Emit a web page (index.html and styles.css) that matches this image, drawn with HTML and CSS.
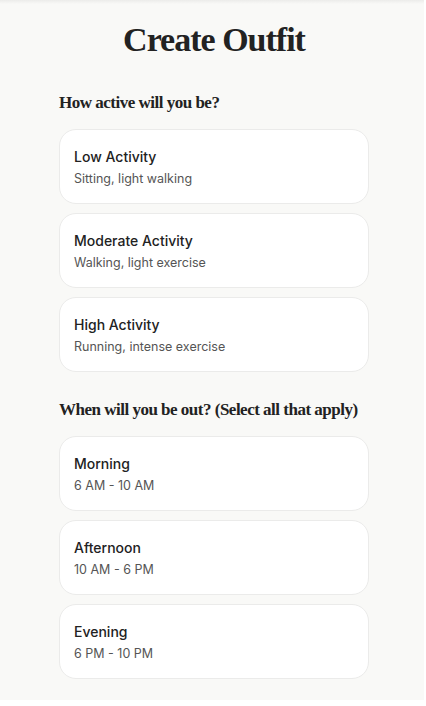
FILE: index.html
```html
<!DOCTYPE html>
<html lang="en">
<head>
<meta charset="utf-8">
<title>Create Outfit</title>
<link rel="stylesheet" href="styles.css">
</head>
<body>
<div class="page">
  <h1 class="title">Create Outfit</h1>
  <section class="group">
    <h2 class="group-heading">How active will you be?</h2>
    <div class="options">
      <div class="card"><div class="card-title">Low Activity</div><div class="card-sub">Sitting, light walking</div></div>
      <div class="card"><div class="card-title">Moderate Activity</div><div class="card-sub">Walking, light exercise</div></div>
      <div class="card"><div class="card-title">High Activity</div><div class="card-sub">Running, intense exercise</div></div>
    </div>
  </section>
  <section class="group">
    <h2 class="group-heading">When will you be out? (Select all that apply)</h2>
    <div class="options">
      <div class="card"><div class="card-title">Morning</div><div class="card-sub">6 AM - 10 AM</div></div>
      <div class="card"><div class="card-title">Afternoon</div><div class="card-sub">10 AM - 6 PM</div></div>
      <div class="card"><div class="card-title">Evening</div><div class="card-sub">6 PM - 10 PM</div></div>
    </div>
  </section>
</div>
</body>
</html>
```
FILE: styles.css
```css
html, body {
  margin: 0;
  padding: 0;
  background: #ffffff;
}
.page {
  width: 424px;
  height: 700px;
  box-sizing: border-box;
  background: linear-gradient(#ececea 0, #f9f9f7 4px) #f9f9f7;
  padding: 18px 55px 0 59px;
  display: flex;
  flex-direction: column;
  overflow: hidden;
}
.title {
  margin: 0;
  text-align: center;
  font-family: "Liberation Serif", "DejaVu Serif", serif;
  font-weight: 700;
  font-size: 34px;
  line-height: 44px;
  color: #222222;
  letter-spacing: -1px;
}
.group {
  display: flex;
  flex-direction: column;
}
.group-heading {
  margin: 0;
  font-family: "Liberation Serif", "DejaVu Serif", serif;
  font-weight: 700;
  font-size: 17px;
  line-height: 22px;
  color: #222222;
  letter-spacing: -0.5px;
}
.group:first-of-type .group-heading {
  margin-top: 30px;
}
.group + .group .group-heading {
  margin-top: 27px;
}
.options {
  margin-top: 15px;
  display: flex;
  flex-direction: column;
  gap: 9px;
}
.card {
  height: 75px;
  box-sizing: border-box;
  background: #ffffff;
  border: 1px solid #ebebea;
  border-radius: 17px;
  padding: 17px 15px 0 14px;
}
.card-title {
  font-family: "Inter", "Liberation Sans", sans-serif;
  font-weight: 500;
  font-size: 14px;
  line-height: 20px;
  color: #222222;
}
.card-sub {
  margin-top: 3px;
  font-family: "Inter", "Liberation Sans", sans-serif;
  font-size: 12.5px;
  line-height: 18px;
  color: #555555;
}
```
